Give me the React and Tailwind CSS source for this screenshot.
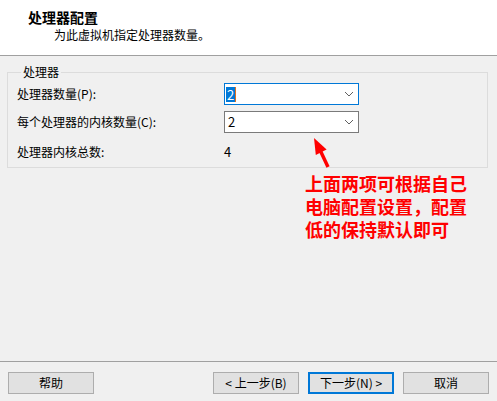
import React from 'react';

const font = { fontFamily: '"Noto Sans CJK SC", "Noto Sans", sans-serif' };

function Chevron() {
  return (
    <svg width="10" height="6" viewBox="0 0 10 6" className="mr-[4px]">
      <path d="M1 1 L5 5 L9 1" fill="none" stroke="#606060" strokeWidth="1" />
    </svg>
  );
}

function Combo({ focused, children }) {
  return (
    <div
      className={`w-[135px] h-[22px] bg-white border flex items-center justify-between ${
        focused ? 'border-[#0078d7]' : 'border-[#7a7a7a]'
      }`}
    >
      <div className="pl-[1px] flex items-center text-[13px] leading-[16px]">{children}</div>
      <Chevron />
    </div>
  );
}

function Button({ children, primary }) {
  return (
    <div
      className={`w-[86px] h-[22px] bg-[#e1e1e1] flex items-center justify-center text-[12px] text-black ${
        primary ? 'border-2 border-[#0078d7]' : 'border border-[#adadad]'
      }`}
    >
      {children}
    </div>
  );
}

export default function App() {
  return (
    <div className="relative w-[497px] h-[401px] bg-[#f0f0f0] flex flex-col text-black" style={font}>
      {/* header */}
      <div className="h-[56px] bg-white border-b border-[#a0a0a0] pt-[8px]">
        <div className="pl-[28px] text-[14px] leading-[18px] font-bold">处理器配置</div>
        <div className="pl-[54px] text-[12px] leading-[16px] mt-[1px]">为此虚拟机指定处理器数量。</div>
      </div>

      {/* group box */}
      <fieldset className="mx-[7px] mt-[8px] w-[481px] border border-[#dcdcdc] px-[9px] pb-[4px]">
        <legend className="ml-[4px] px-[2px] text-[12px] leading-[16px]">处理器</legend>
        <div className="mt-[3px] flex items-center h-[22px]">
          <div className="w-[207px] text-[12px]">处理器数量(P):</div>
          <Combo focused>
            <span className="bg-[#0078d7] text-white px-[1px] leading-[15px]">2</span>
            <span className="w-[1px] h-[15px] bg-[#e07020]" />
          </Combo>
        </div>
        <div className="mt-[6px] flex items-center h-[22px]">
          <div className="w-[207px] text-[12px]">每个处理器的内核数量(C):</div>
          <Combo>
            <span className="pl-[2px]">2</span>
          </Combo>
        </div>
        <div className="mt-[8px] flex items-center h-[22px]">
          <div className="w-[207px] text-[12px]">处理器内核总数:</div>
          <div className="text-[13px]">4</div>
        </div>
      </fieldset>

      {/* annotation */}
      <div className="ml-[305px] mt-[4px] text-[18px] leading-[23px] font-bold text-[#ff0000]">
        <div>上面两项可根据自己</div>
        <div>电脑配置设置，配置</div>
        <div>低的保持默认即可</div>
      </div>

      <svg
        width="30"
        height="36"
        viewBox="0 0 30 36"
        className="absolute left-[305px] top-[135px] pointer-events-none"
      >
        <line x1="23" y1="32" x2="15.5" y2="16" stroke="#ff0000" strokeWidth="3.5" />
        <polygon points="9,3 21.6,14.6 10.8,20" fill="#ff0000" />
      </svg>

      <div className="flex-1" />

      {/* footer */}
      <div className="border-t border-[#a0a0a0] pt-[10px] pb-[7px] px-[8px] flex items-center">
        <Button>帮助</Button>
        <div className="flex-1" />
        <div className="flex gap-[9px]">
          <Button>&lt; 上一步(B)</Button>
          <Button primary>下一步(N) &gt;</Button>
          <Button>取消</Button>
        </div>
      </div>
    </div>
  );
}
